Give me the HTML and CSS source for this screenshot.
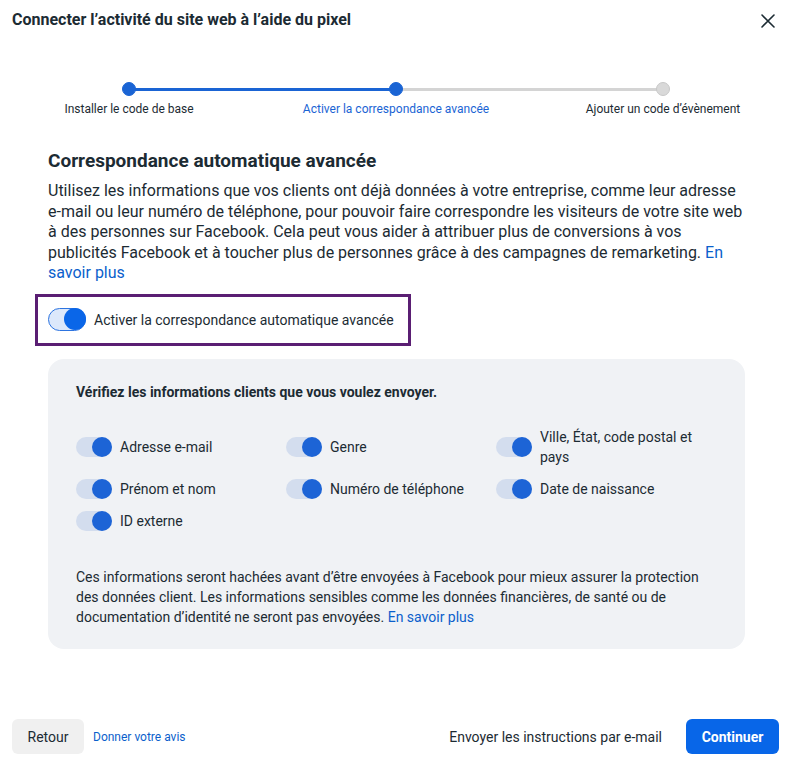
FILE: index.html
```html
<!DOCTYPE html>
<html lang="fr">
<head>
<meta charset="utf-8">
<link rel="stylesheet" href="styles.css">
</head>
<body>
<div class="dialog">
  <header class="head">
    <h1 class="title">Connecter l’activité du site web à l’aide du pixel</h1>
    <button class="close" aria-label="Fermer">
      <svg width="14" height="14" viewBox="0 0 14 14"><path d="M1 1L13 13M13 1L1 13" stroke="#1c2b33" stroke-width="1.6" stroke-linecap="round"/></svg>
    </button>
  </header>

  <div class="stepper">
    <div class="track">
      <span class="seg done"></span>
      <span class="seg"></span>
      <span class="dot d1 on"></span>
      <span class="dot d2 on"></span>
      <span class="dot d3"></span>
    </div>
    <div class="labels">
      <span class="lab"><span>Installer le code de base</span></span>
      <span class="lab cur"><span>Activer la correspondance avancée</span></span>
      <span class="lab"><span>Ajouter un code d’évènement</span></span>
    </div>
  </div>

  <section class="content">
    <h2 class="h2">Correspondance automatique avancée</h2>
    <p class="lead">Utilisez les informations que vos clients ont déjà données à votre entreprise, comme leur adresse e-mail ou leur numéro de téléphone, pour pouvoir faire correspondre les visiteurs de votre site web à des personnes sur Facebook. Cela peut vous aider à attribuer plus de conversions à vos publicités Facebook et à toucher plus de personnes grâce à des campagnes de remarketing. <a class="link">En savoir plus</a></p>

    <div class="highlight">
      <span class="switch big"><span class="knob"></span></span>
      <span class="hl-label">Activer la correspondance automatique avancée</span>
    </div>

    <div class="panel">
      <p class="panel-title">Vérifiez les informations clients que vous voulez envoyer.</p>
      <div class="grid">
        <div class="item"><span class="switch"><span class="knob"></span></span><span class="il">Adresse e-mail</span></div>
        <div class="item"><span class="switch"><span class="knob"></span></span><span class="il">Genre</span></div>
        <div class="item"><span class="switch"><span class="knob"></span></span><span class="il">Ville, État, code postal et pays</span></div>
        <div class="item"><span class="switch"><span class="knob"></span></span><span class="il">Prénom et nom</span></div>
        <div class="item"><span class="switch"><span class="knob"></span></span><span class="il">Numéro de téléphone</span></div>
        <div class="item"><span class="switch"><span class="knob"></span></span><span class="il">Date de naissance</span></div>
        <div class="item"><span class="switch"><span class="knob"></span></span><span class="il">ID externe</span></div>
      </div>
      <p class="note">Ces informations seront hachées avant d’être envoyées à Facebook pour mieux assurer la protection des données client. Les informations sensibles comme les données financières, de santé ou de documentation d’identité ne seront pas envoyées. <a class="link">En savoir plus</a></p>
    </div>
  </section>

  <footer class="foot">
    <div class="left">
      <button class="btn grey">Retour</button>
      <a class="avis">Donner votre avis</a>
    </div>
    <div class="right">
      <a class="mail">Envoyer les instructions par e-mail</a>
      <button class="btn primary">Continuer</button>
    </div>
  </footer>
</div>
</body>
</html>
```

FILE: styles.css
```css
* { box-sizing: border-box; }
html, body { margin: 0; padding: 0; background: #fff; }
body { font-family: Roboto, "Liberation Sans", Arial, sans-serif; color: #1c2b33; }

.dialog { width: 793px; height: 761px; display: flex; flex-direction: column; }

.head { display: flex; justify-content: space-between; align-items: center; padding: 10px 12px 0 12px; height: 30px; }
.title { margin: 0; font-size: 16px; font-weight: 700; line-height: 20px; color: #1c2b33; }
.close { border: 0; background: none; padding: 0; width: 14px; height: 14px; display: flex; margin-right: 6px; margin-top: 1px; }

.stepper { margin-top: 52px; padding: 0 130px 0 129px; }
.track { position: relative; height: 14px; display: flex; align-items: center; }
.seg { flex: 1; height: 3px; background: #d4d4d4; }
.seg.done { background: #1a64d4; }
.dot { position: absolute; top: 0; width: 14px; height: 14px; border-radius: 50%; background: #d9d9d9; border: 1px solid #c8c8c8; margin-left: -7px; }
.dot.on { background: #1a64d4; border-color: #1a64d4; }
.d1 { left: 0; } .d2 { left: 50%; } .d3 { left: 100%; }
.labels { display: flex; justify-content: space-between; margin-top: 5px; }
.lab { width: 0; display: flex; justify-content: center; white-space: nowrap; font-size: 12px; line-height: 16px; color: #1c2b33; }
.lab.cur { color: #1a64d4; }

.content { padding: 0 48px; margin-top: 32px; }
.h2 { margin: 0; font-size: 19px; line-height: 24px; font-weight: 700; color: #1c2b33; }
.lead { margin: 8px 0 0; font-size: 16px; line-height: 20.5px; color: #1c2b33; }
.link { color: #0b5fcc; text-decoration: none; }

.highlight { display: inline-flex; align-items: center; margin: 10px 0 0 -13px; width: 376px; height: 52px; border: 3px solid #5a1e73; padding-left: 10px; gap: 8px; }
.hl-label { font-size: 14px; line-height: 18px; color: #1c2b33; }

.switch { position: relative; display: inline-block; width: 36px; height: 20px; border-radius: 10px; background: #d3ddee; flex: none; }
.switch .knob { position: absolute; right: 0; top: 0; width: 20px; height: 20px; border-radius: 50%; background: #1d64d6; }
.switch.big { width: 38px; height: 23px; border-radius: 12px; background: #dce8fb; border: 1.5px solid #2d74e0; }
.switch.big .knob { width: 22px; height: 22px; top: -1px; right: -1px; background: #0a66e8; }

.panel { margin-top: 13px; background: #f0f2f5; border-radius: 16px; padding: 24px 28px 0 28px; height: 290px; }
.panel-title { margin: 0; font-size: 14px; line-height: 18px; font-weight: 700; color: #1c2b33; }
.grid { display: grid; grid-template-columns: 210px 210px 210px; row-gap: 12px; margin-top: 26px; }
.item { display: flex; align-items: center; gap: 8px; }
.il { font-size: 14px; line-height: 20px; color: #1c2b33; width: 200px; }
.note { margin: 36px 0 0; font-size: 14px; line-height: 20px; color: #1c2b33; }

.foot { margin-top: auto; display: flex; justify-content: space-between; align-items: center; padding: 0 14px 7px 12px; }
.left, .right { display: flex; align-items: center; }
.btn { border: 0; font-family: inherit; height: 35px; border-radius: 6px; cursor: pointer; }
.btn.grey { width: 72px; background: #f0f0f0; font-size: 14px; color: #1c2b33; }
.avis { margin-left: 9px; font-size: 12px; color: #0b5fcc; }
.mail { font-size: 14px; color: #1c2b33; margin-right: 24px; }
.btn.primary { width: 93px; background: #0866e8; color: #fff; font-size: 14px; font-weight: 700; }
```
